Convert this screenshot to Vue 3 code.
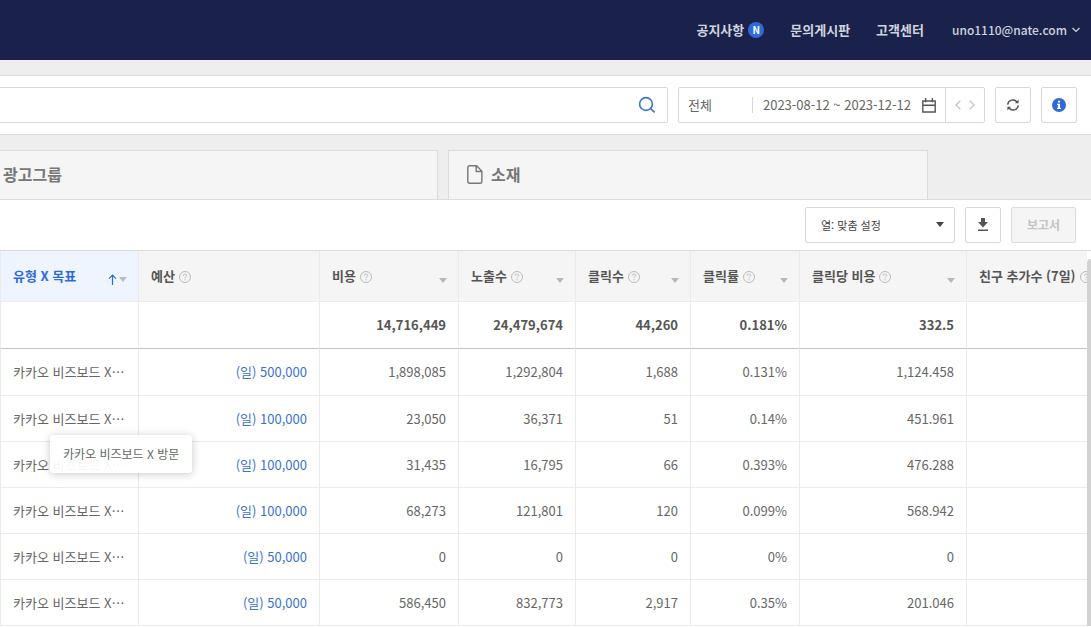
<script setup>
import { ref } from 'vue'

const search = ref('')
const preset = ref('custom')

const columns = [
  { label: '예산', width: 181, help: true, sort: false },
  { label: '비용', width: 139, help: true, sort: true },
  { label: '노출수', width: 117, help: true, sort: true },
  { label: '클릭수', width: 115, help: true, sort: true },
  { label: '클릭률', width: 109, help: true, sort: true },
  { label: '클릭당 비용', width: 167, help: true, sort: true },
  { label: '친구 추가수 (7일)', width: 181, help: true, sort: false },
]

const totals = ['', '14,716,449', '24,479,674', '44,260', '0.181%', '332.5', '']

const rows = [
  { budget: '(일) 500,000', values: ['1,898,085', '1,292,804', '1,688', '0.131%', '1,124.458', ''] },
  { budget: '(일) 100,000', values: ['23,050', '36,371', '51', '0.14%', '451.961', ''] },
  { budget: '(일) 100,000', values: ['31,435', '16,795', '66', '0.393%', '476.288', ''] },
  { budget: '(일) 100,000', values: ['68,273', '121,801', '120', '0.099%', '568.942', ''] },
  { budget: '(일) 50,000', values: ['0', '0', '0', '0%', '0', ''] },
  { budget: '(일) 50,000', values: ['586,450', '832,773', '2,917', '0.35%', '201.046', ''] },
]
</script>

<template>
  <div class="page" lang="ko">
    <header class="topbar">
      <nav class="nav">
        <a href="#notice" class="nav-link">공지사항<span class="badge">N</span></a>
        <a href="#board" class="nav-link">문의게시판</a>
        <a href="#help" class="nav-link">고객센터</a>
        <button type="button" class="account">
          uno1110@nate.com
          <svg width="8" height="6" viewBox="0 0 8 6" fill="none" stroke="currentColor" stroke-width="1.2"><path d="M.5 1 4 4.5 7.5 1" /></svg>
        </button>
      </nav>
    </header>

    <section class="filters">
      <form class="search" @submit.prevent>
        <input v-model="search" type="text" class="search-input" aria-label="검색" />
        <button type="submit" class="icon-plain" aria-label="검색 실행">
          <svg width="18" height="18" viewBox="0 0 18 18" fill="none" stroke="#3b72d0" stroke-width="1.6"><circle cx="8" cy="8" r="6.4" /><path d="m12.6 12.6 4 3.8" /></svg>
        </button>
      </form>
      <div class="range">
        <button type="button" class="range-type">전체</button>
        <button type="button" class="range-dates">
          2023-08-12 ~ 2023-12-12
          <svg width="14" height="15" viewBox="0 0 14 15" fill="none" stroke="#555" stroke-width="1.4"><path d="M.8 3h12.4v11H.8zM.8 7.2h12.4M3.6 0v4.2M10.4 0v4.2" /></svg>
        </button>
        <div class="range-steps">
          <button type="button" class="step" aria-label="이전 기간">
            <svg width="6" height="10" viewBox="0 0 6 10" fill="none" stroke="#c4c4c4" stroke-width="1.3"><path d="M5.3.8 1 5l4.3 4.2" /></svg>
          </button>
          <button type="button" class="step" aria-label="다음 기간">
            <svg width="6" height="10" viewBox="0 0 6 10" fill="none" stroke="#c4c4c4" stroke-width="1.3"><path d="M.7.8 5 5 .7 9.2" /></svg>
          </button>
        </div>
      </div>
      <button type="button" class="square" aria-label="새로고침">
        <svg width="14" height="14" viewBox="0 0 14 14" fill="none" stroke="#555" stroke-width="1.5"><path d="M1.7 6.6A5.2 5.2 0 0 1 11 4M12.3 7.4A5.2 5.2 0 0 1 3 10" /><path d="M12.6 1.6v3.6H9zM1.4 12.4V8.8H5z" fill="#555" stroke="none" /></svg>
      </button>
      <button type="button" class="square" aria-label="안내">
        <svg width="14" height="14" viewBox="0 0 14 14"><circle cx="7" cy="7" r="7" fill="#2f6bd8" /><path d="M6 2.8h2v1.8H6zM5 5.8h3v4h1v1.3H5V9.8h1V7H5z" fill="#fff" /></svg>
      </button>
    </section>

    <nav class="tabs">
      <a href="#groups" class="tab tab-first">광고그룹</a>
      <a href="#creatives" class="tab">
        <svg width="16" height="19" viewBox="0 0 16 19" fill="none" stroke="#777" stroke-width="1.4" stroke-linejoin="round"><path d="M2.5.8h7.2l5.2 5.4v10.2c0 1-.7 1.8-1.7 1.8H2.5c-1 0-1.7-.8-1.7-1.8V2.6C.8 1.6 1.5.8 2.5.8zM9.2 1v5.5h5.6" /></svg>
        소재
      </a>
    </nav>

    <section class="toolbar">
      <div class="select-wrap">
        <select v-model="preset" class="select" aria-label="열 설정">
          <option value="custom">열: 맞춤 설정</option>
        </select>
        <svg class="select-arrow" width="8" height="5" viewBox="0 0 8 5"><path d="M0 0h8L4 5z" fill="#444" /></svg>
      </div>
      <button type="button" class="square" aria-label="다운로드">
        <svg width="12" height="14" viewBox="0 0 12 14" fill="#555"><path d="M4 0h4v4h3L6 9.5 1 4h3zM1 11.4h10V13H1z" /></svg>
      </button>
      <button type="button" class="report" disabled>보고서</button>
    </section>

    <section class="table-area">
      <div class="table-clip">
        <table class="grid">
          <colgroup>
            <col width="139" />
            <col v-for="c in columns" :key="c.label" :width="c.width" />
          </colgroup>
          <thead>
            <tr>
              <th class="sorted" scope="col">
                <div class="head">
                  <span>유형 X 목표</span>
                  <span class="sort">
                    <svg width="9" height="11" viewBox="0 0 9 11" fill="none" stroke="#2f6bd8" stroke-width="1.2"><path d="M4.5 11V1.2M1 4.6l3.5-3.5L8 4.6" /></svg>
                    <svg width="8" height="5" viewBox="0 0 8 5"><path d="M0 0h8L4 5z" fill="#b9bdc5" /></svg>
                  </span>
                </div>
              </th>
              <th v-for="c in columns" :key="c.label" scope="col">
                <div class="head">
                  <span class="head-label">
                    {{ c.label }}
                    <svg v-if="c.help" class="help" width="12" height="12" viewBox="0 0 12 12" fill="none" stroke="#bbb"><circle cx="6" cy="6" r="5.5" /><path d="M4.3 4.7C4.3 3.7 5 3.1 6 3.1s1.7.6 1.7 1.5C7.7 5.7 6 5.8 6 7.2M6 8.2v1.1" /></svg>
                  </span>
                  <span v-if="c.sort" class="sort">
                    <svg width="8" height="5" viewBox="0 0 8 5"><path d="M0 0h8L4 5z" fill="#b8b8b8" /></svg>
                  </span>
                </div>
              </th>
            </tr>
          </thead>
          <tbody>
            <tr class="total">
              <td></td>
              <td v-for="(t, i) in totals" :key="i">{{ t }}</td>
            </tr>
            <tr v-for="(r, i) in rows" :key="i">
              <td class="name">카카오 비즈보드 X…</td>
              <td><a href="#budget" class="budget">{{ r.budget }}</a></td>
              <td v-for="(v, j) in r.values" :key="j">{{ v }}</td>
            </tr>
          </tbody>
        </table>
      </div>
      <div class="scrollbar"></div>
      <div class="tooltip" role="tooltip">카카오 비즈보드 X 방문</div>
    </section>
  </div>
</template>

<style>
body {
  overflow: hidden;
}
</style>

<style scoped>
.page,
.page button,
.page input,
.page select {
  font-family: "Noto Sans CJK KR", "Noto Sans", sans-serif;
  font-size: 13px;
  line-height: 20px;
}
.page {
  background: linear-gradient(#eee, #eee) 0 0 / 100% 200px no-repeat #fff;
  color: #666;
}
.page * {
  box-sizing: border-box;
}
a {
  text-decoration: none;
  color: inherit;
}
button {
  margin: 0;
  padding: 0;
  border: 0;
  background: none;
  color: inherit;
  cursor: pointer;
}
svg {
  display: block;
  flex: none;
}

.topbar {
  background: #1a224b;
  color: #d0d3df;
  padding: 20px 11px;
}
.nav {
  display: flex;
  justify-content: flex-end;
  align-items: center;
  gap: 26px;
}
.nav-link {
  display: flex;
  align-items: center;
  gap: 4px;
  font-weight: 700;
}
.badge {
  width: 16px;
  border-radius: 8px;
  background: #2f6bd8;
  color: #fff;
  font-size: 10px;
  font-weight: 700;
  line-height: 16px;
  text-align: center;
}
.page .account {
  display: flex;
  align-items: center;
  gap: 5px;
  margin-left: 2px;
  font-size: 12px;
  font-weight: 500;
}

.filters {
  display: flex;
  gap: 10px;
  margin-top: 15px;
  padding: 11px 14px 11px 0;
  border-top: 1px solid #dcdcdc;
  border-bottom: 1px solid #dcdcdc;
}
.filters,
.toolbar {
  background: #fff;
}
.search {
  flex: 1;
  display: flex;
  align-items: center;
  min-width: 0;
  height: 36px;
  padding-right: 11px;
  border: 1px solid #d8d8d8;
  border-left: 0;
  border-radius: 0 2px 2px 0;
}
.search-input {
  flex: 1;
  min-width: 0;
  height: 34px;
  border: 0;
  outline: 0;
  background: none;
}
.range {
  display: flex;
  align-items: center;
  height: 36px;
  border: 1px solid #d8d8d8;
  border-radius: 2px;
}
.range-type {
  width: 74px;
  height: 16px;
  padding-left: 9px;
  border-right: 1px solid #d8d8d8;
  text-align: left;
}
.page .range-type {
  line-height: 16px;
}
.range-dates {
  display: flex;
  align-items: center;
  gap: 11px;
  padding: 0 9px 0 10px;
  white-space: nowrap;
}
.range-steps {
  display: flex;
  align-items: center;
  justify-content: center;
  gap: 8px;
  align-self: stretch;
  width: 39px;
  border-left: 1px solid #d8d8d8;
}
.square {
  display: flex;
  align-items: center;
  justify-content: center;
  width: 36px;
  height: 36px;
  border: 1px solid #d8d8d8;
  border-radius: 2px;
  background: #fff;
}

.tabs {
  display: grid;
  grid-template-columns: 438fr 480fr 153fr;
  gap: 10px;
  padding-top: 15px;
  border-bottom: 1px solid #dcdcdc;
}
.tab {
  display: flex;
  align-items: center;
  gap: 8px;
  padding: 11px 18px 13px;
  border: 1px solid #dcdcdc;
  border-bottom: 0;
  background: #f5f5f5;
  color: #777;
  font-size: 16px;
  font-weight: 700;
  line-height: 24px;
}
.tab-first {
  padding-left: 3px;
  border-left: 0;
}

.toolbar {
  display: flex;
  justify-content: flex-end;
  gap: 10px;
  padding: 7px 15px;
}
.select-wrap {
  position: relative;
  width: 150px;
}
.select {
  appearance: none;
  width: 100%;
  height: 36px;
  padding: 0 28px 0 15px;
  border: 1px solid #d8d8d8;
  border-radius: 2px;
  background: #fff;
  color: #444;
}
.page .select {
  font-size: 11px;
}
.select-arrow {
  position: absolute;
  right: 11px;
  top: 15px;
  pointer-events: none;
}
.report {
  width: 65px;
  height: 36px;
}
.page .report {
  border: 1px solid #dcdcdc;
  border-radius: 2px;
  background: #f5f5f5;
  color: #c4c4c4;
  font-size: 12px;
  font-weight: 700;
}

.table-area {
  position: relative;
  border-top: 1px solid #dcdcdc;
  background: #fff;
}
.table-clip {
  overflow: hidden;
  margin-right: 4px;
}
.grid {
  width: 1148px;
  table-layout: fixed;
  border-collapse: separate;
  border-spacing: 0;
}
th,
td {
  padding: 13px 12px 12px;
  border-right: 1px solid #ebebeb;
  border-bottom: 1px solid #ebebeb;
  text-align: right;
  vertical-align: top;
  white-space: nowrap;
}
th:first-child,
td:first-child {
  border-left: 1px solid #ebebeb;
}
th {
  padding: 15px 11px 15px 12px;
  background: #f5f5f5;
  color: #555;
  font-weight: 700;
}
.sorted {
  background: #eff5ff;
  color: #2f6bd8;
}
.head,
.head-label {
  display: flex;
  align-items: center;
}
.head {
  justify-content: space-between;
}
.head-label {
  gap: 4px;
}
.help {
  margin-top: 2px;
}
.sort {
  display: flex;
  align-items: center;
  gap: 2px;
  padding-top: 8px;
}
.sorted .sort {
  padding-top: 6px;
}
.total td {
  height: 47px;
  border-bottom-color: #c4c4c4;
  color: #555;
  font-weight: 700;
}
.total + tr td {
  height: 47px;
}
td.name {
  text-align: left;
}
.budget {
  color: #3b72d0;
}
.scrollbar {
  position: absolute;
  top: 8px;
  right: 0;
  bottom: 0;
  width: 4px;
  border-radius: 4px 0 0 0;
  background: #d2d2d2;
}
.tooltip {
  position: absolute;
  left: 50px;
  top: 184px;
  padding: 9px 13px;
  border-radius: 4px;
  background: rgba(255, 255, 255, 0.94);
  box-shadow: 0 1px 8px rgba(0, 0, 0, 0.22);
  font-size: 12px;
}
</style>
